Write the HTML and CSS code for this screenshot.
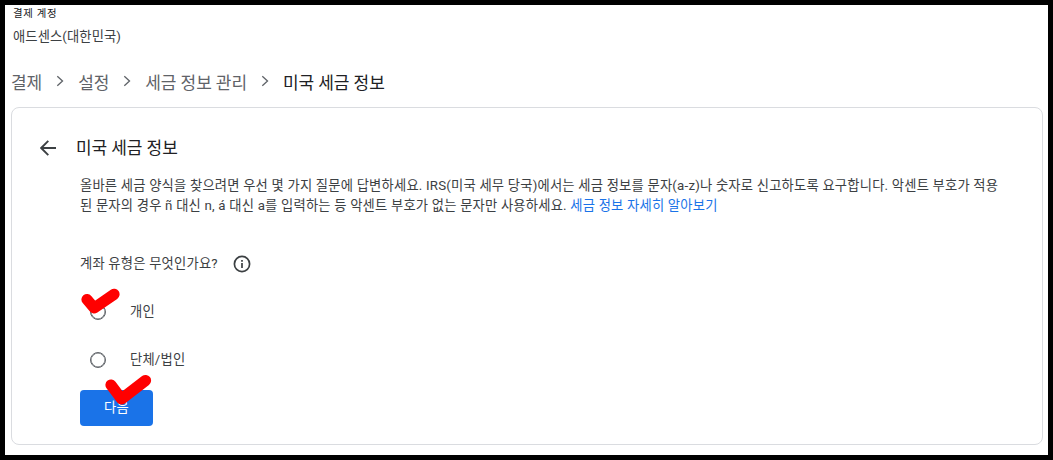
FILE: index.html
```html
<!DOCTYPE html>
<html lang="ko">
<head>
<meta charset="utf-8">
<title>미국 세금 정보</title>
<link rel="stylesheet" href="styles.css">
</head>
<body>
<div class="page">
  <header class="account">
    <div class="account-label">결제 계정</div>
    <div class="account-name">애드센스(대한민국)</div>
  </header>
  <nav class="crumbs">
    <span>결제</span>
    <svg class="chevron" viewBox="0 0 8 12"><path d="M1.3 1.3 6.5 6 1.3 10.7"/></svg>
    <span>설정</span>
    <svg class="chevron" viewBox="0 0 8 12"><path d="M1.3 1.3 6.5 6 1.3 10.7"/></svg>
    <span>세금 정보 관리</span>
    <svg class="chevron" viewBox="0 0 8 12"><path d="M1.3 1.3 6.5 6 1.3 10.7"/></svg>
    <span class="current">미국 세금 정보</span>
  </nav>
  <main class="card">
    <div class="heading">
      <svg class="back" viewBox="0 0 16 16"><path d="M16 8H1.5M8.3 .9 1.2 8l7.1 7.1"/></svg>
      <h1>미국 세금 정보</h1>
    </div>
    <p class="intro">올바른 세금 양식을 찾으려면 우선 몇 가지 질문에 답변하세요. IRS(미국 세무 당국)에서는 세금 정보를 문자(a-z)나 숫자로 신고하도록 요구합니다. 악센트 부호가 적용<br>된 문자의 경우 ñ 대신 n, á 대신 a를 입력하는 등 악센트 부호가 없는 문자만 사용하세요. <a class="link">세금 정보 자세히 알아보기</a></p>
    <div class="question">
      <span class="label">계좌 유형은 무엇인가요?</span>
      <svg class="info" viewBox="0 0 18 18"><circle cx="9" cy="9" r="7.6"/><path d="M9 8v5M9 5v1.7"/></svg>
    </div>
    <div class="option">
      <span class="radio"></span><span class="label">개인</span>
      <svg class="tick tick-option" viewBox="0 0 40 28"><path d="M7 11.5 14.2 20 34 6.3"/></svg>
    </div>
    <div class="option"><span class="radio"></span><span class="label">단체/법인</span></div>
    <div class="next">
      <span>다음</span>
      <svg class="tick tick-next" viewBox="0 0 48 32"><path d="M7 11 17.5 25 41.5 6.5"/></svg>
    </div>
  </main>
</div>
</body>
</html>
```
FILE: styles.css
```css
* { box-sizing: border-box; }
body {
  margin: 0;
  font-family: Roboto, "Noto Sans CJK KR", sans-serif;
  font-size: 13.3px;
  letter-spacing: 0.2px;
  color: #3c4043;
}
.page {
  display: flex;
  flex-direction: column;
  width: 1053px;
  height: 460px;
  padding: 0 6px;
  border: 5px solid #000;
  background: #fff;
  white-space: nowrap;
}
.account { padding-left: 2px; }
.account-label {
  height: 17px;
  line-height: 17px;
  font-size: 10.4px;
  letter-spacing: 0.7px;
  color: #202124;
}
.account-name { height: 30px; line-height: 30px; letter-spacing: 0.1px; }
.crumbs {
  display: flex;
  align-items: center;
  gap: 14px;
  height: 50px;
  padding-top: 9px;
  font-size: 17px;
  letter-spacing: -0.07px;
  color: #5f6368;
}
.current { color: #202124; }
.chevron {
  width: 8px;
  height: 12px;
  margin-top: -2px;
  fill: none;
  stroke: #5f6368;
  stroke-width: 1.3;
}
.card {
  width: 1032px;
  height: 338px;
  margin-top: 5px;
  padding: 24px 0 0 68px;
  border: 1px solid #dadce0;
  border-radius: 8px;
}
.heading {
  display: flex;
  align-items: center;
  gap: 20px;
  height: 32px;
  margin-left: -40px;
}
.back {
  width: 16px;
  height: 16px;
  fill: none;
  stroke: #3c4043;
  stroke-width: 1.9;
}
h1 {
  margin: 0;
  padding-bottom: 3px;
  font-size: 17px;
  font-weight: 400;
  letter-spacing: -0.07px;
  color: #202124;
}
.intro { margin: 12px 0 0; line-height: 20px; }
.link { color: #1a73e8; }
.question {
  display: flex;
  align-items: center;
  gap: 15px;
  height: 20px;
  margin-top: 38px;
}
.label { padding-bottom: 3px; }
.info {
  width: 18px;
  height: 18px;
  fill: none;
  stroke: #3c4043;
  stroke-width: 1.7;
}
.option {
  position: relative;
  display: flex;
  align-items: center;
  gap: 24px;
  height: 48px;
  padding-left: 10px;
}
.question + .option { margin-top: 14px; }
.radio {
  width: 16px;
  height: 16px;
  border: 1.5px solid #5f6368;
  border-radius: 50%;
  box-shadow: inset 0 0 0 0.5px #5f6368;
}
.next {
  position: relative;
  width: 73px;
  height: 36px;
  margin-top: 6px;
  border-radius: 4px;
  background: #1a73e8;
  color: #fff;
  text-align: center;
  line-height: 36px;
}
.tick {
  position: absolute;
  fill: none;
  stroke: #f00;
  stroke-width: 11.2;
  stroke-linecap: round;
  stroke-linejoin: round;
}
.tick-option { left: 0; top: 0; width: 40px; height: 28px; }
.tick-next { left: 24px; top: -16px; width: 48px; height: 32px; }
```
